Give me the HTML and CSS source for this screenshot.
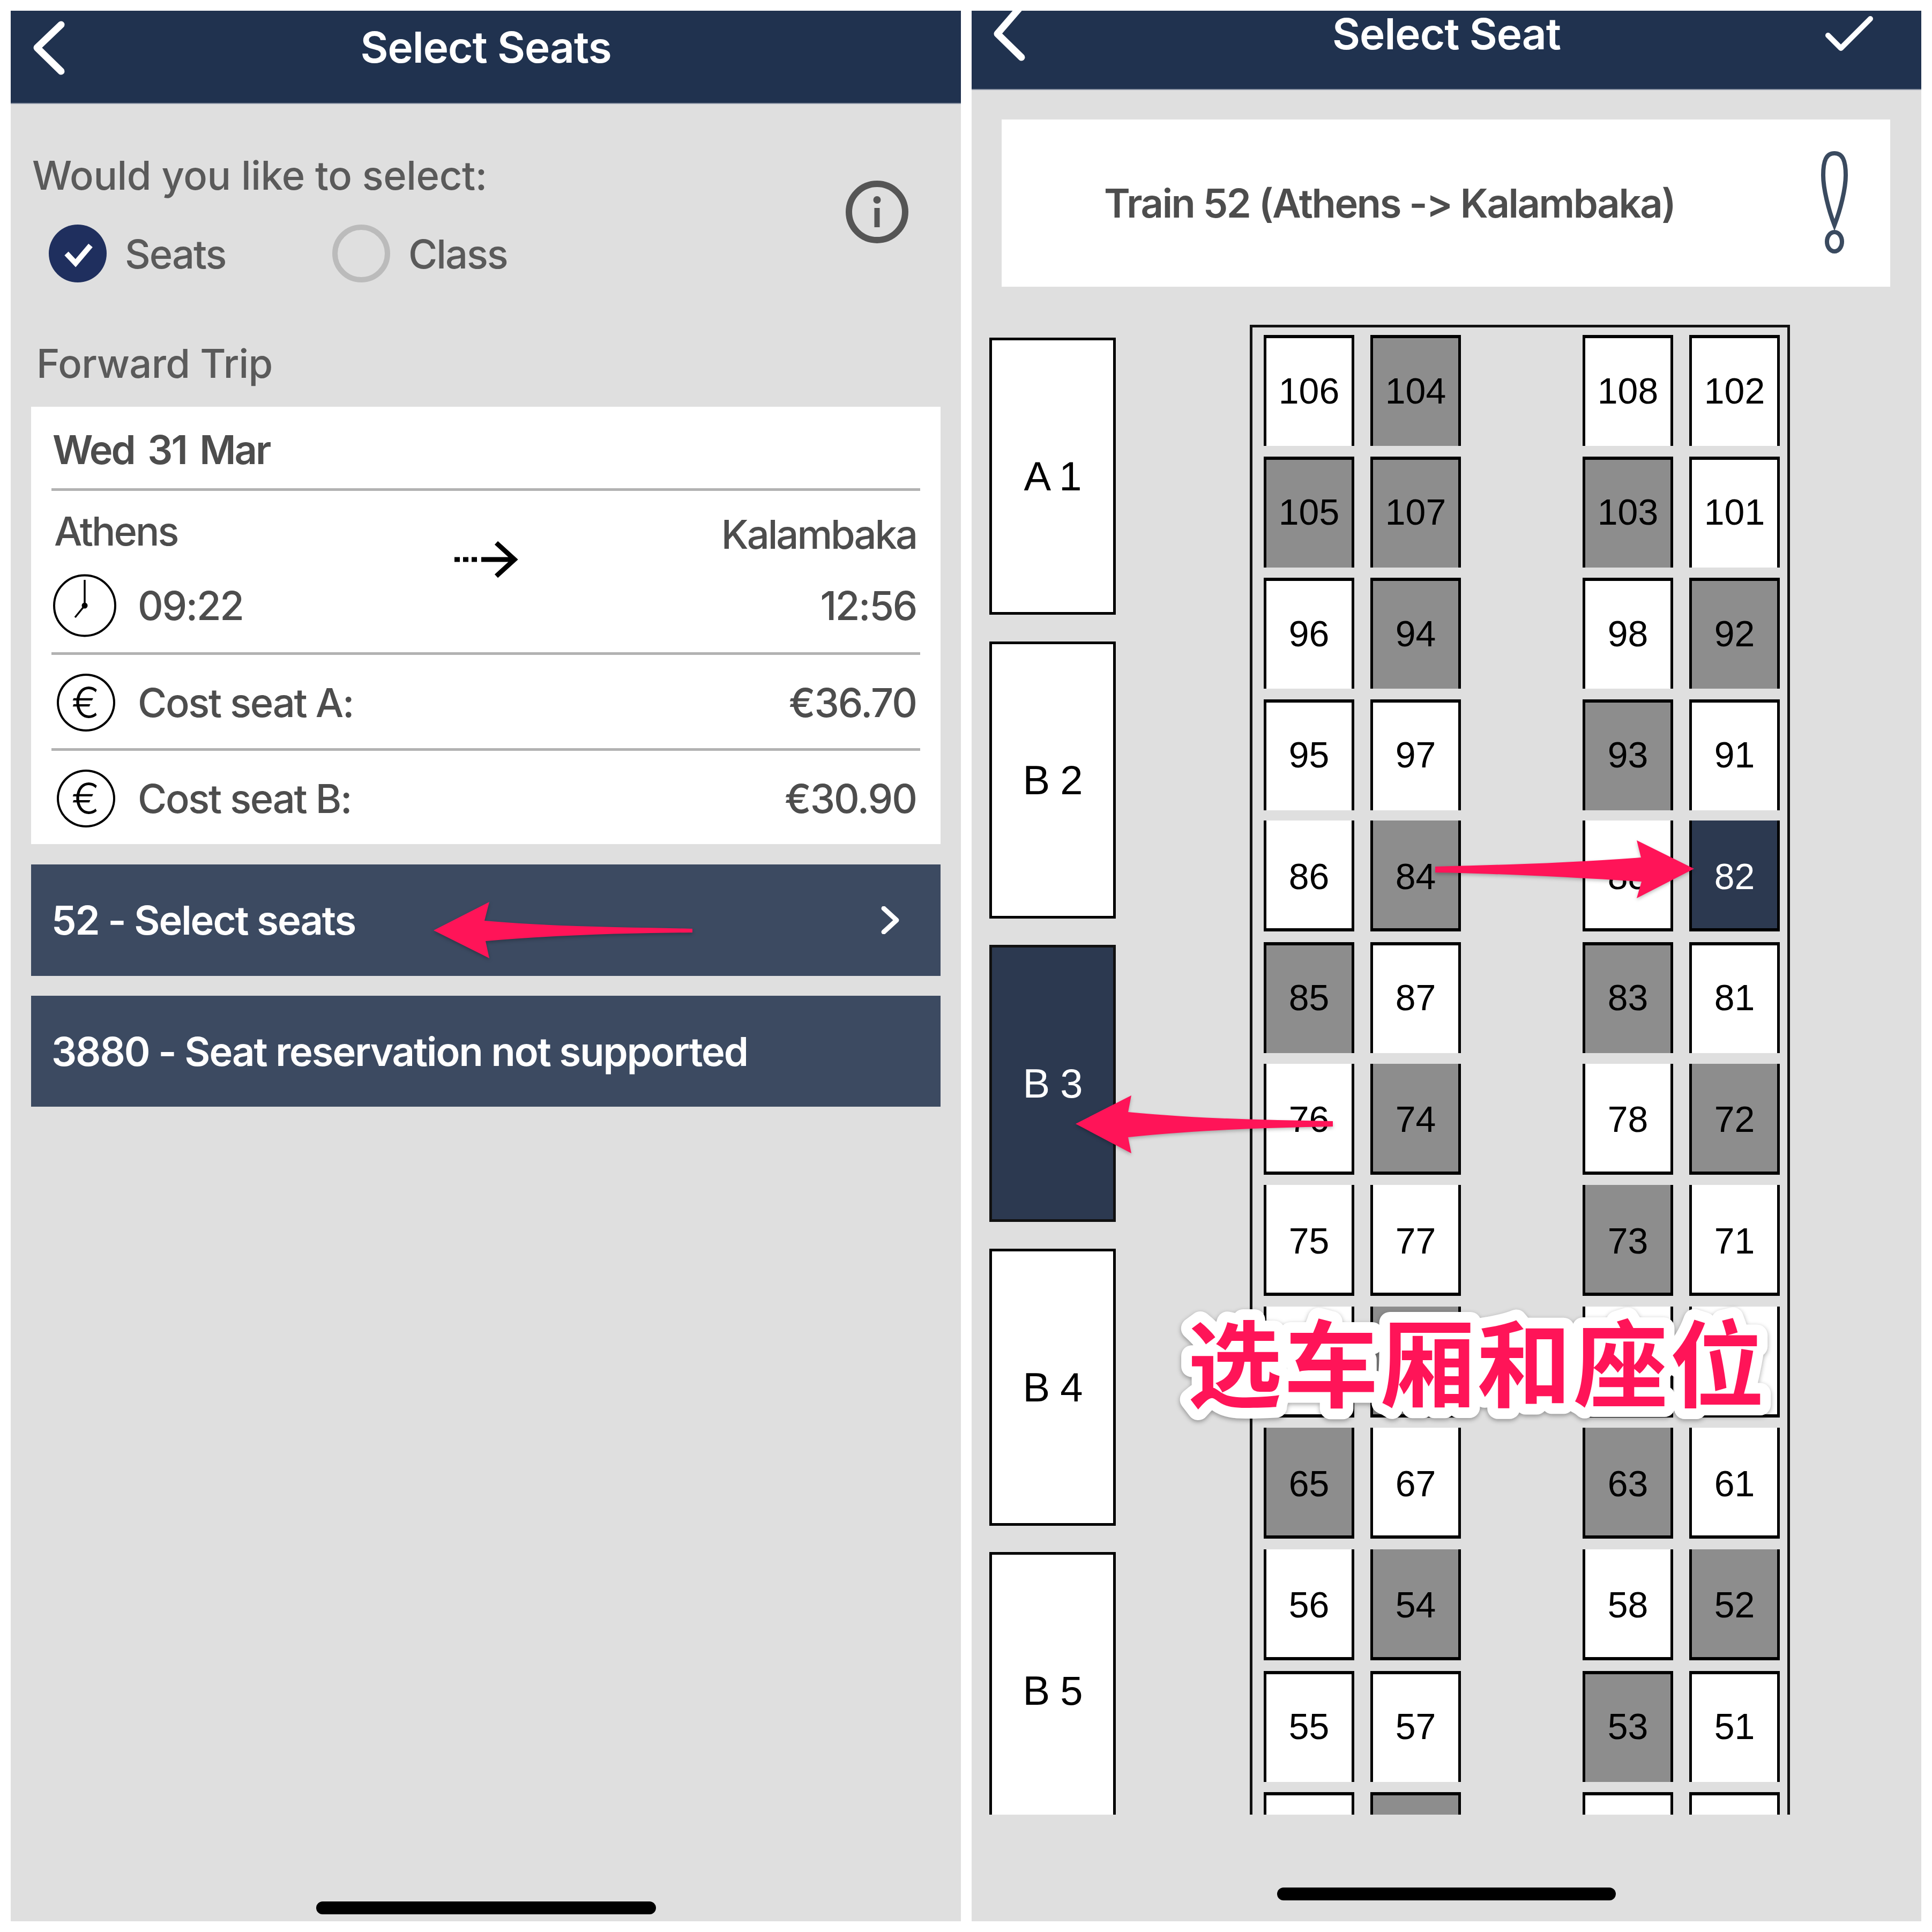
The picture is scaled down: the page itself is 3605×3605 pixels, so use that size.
FILE: index.html
```html
<!DOCTYPE html>
<html lang="en">
<head>
<meta charset="utf-8">
<title>Select Seats</title>
<link rel="stylesheet" href="styles.css">
</head>
<body>
<div class="page">
  <section class="panel">
    <header class="bar bar-left">
      <svg class="back back-left" viewBox="0 0 56 97"><path d="M51 5 L6 48 L51 92" /></svg>
      <h1 class="bar-title">Select Seats</h1>
    </header>
    <div class="choice">
      <div>
        <div class="label would">Would you like to select:</div>
        <div class="radios">
          <div class="radio-item first">
            <svg class="radio" viewBox="0 0 108 108"><circle cx="54" cy="54" r="54" fill="#1f2f5e"/><path d="M33 54 L50 72 L78 39" fill="none" stroke="#fff" stroke-width="10"/></svg>
            <span class="label opt">Seats</span>
          </div>
          <div class="radio-item">
            <svg class="radio" viewBox="0 0 108 108"><circle cx="54" cy="54" r="49" fill="none" stroke="#bbb" stroke-width="10"/></svg>
            <span class="label opt">Class</span>
          </div>
        </div>
      </div>
      <svg class="info" viewBox="0 0 117 117"><circle cx="58.500" cy="58.500" r="52.500" fill="none" stroke="#555" stroke-width="12"/><circle cx="58.500" cy="36" r="7" fill="#555"/><rect x="53.500" y="51" width="10" height="36" fill="#555"/></svg>
    </div>
    <div class="label trip">Forward Trip</div>
    <div class="card">
      <div class="date">Wed 31 Mar</div>
      <div class="rule"></div>
      <div class="route">
        <div class="route-side">
          <div class="city">Athens</div>
          <div class="time">
            <svg class="clock" viewBox="0 0 118 118"><ellipse cx="59" cy="59" rx="57" ry="56.500" fill="none" stroke="#000" stroke-width="4"/><path d="M59 11 V59 L41 81" fill="none" stroke="#000" stroke-width="3.500"/><circle cx="59" cy="59" r="5.500"/></svg>
            <span>09:22</span>
          </div>
        </div>
        <svg class="dots-arrow" viewBox="0 0 116 66"><path d="M0 33 H10 M16 33 H26 M32 33 H42" stroke="#000" stroke-width="9" fill="none"/><path d="M50 33 H111 M78 2 L112 33 L78 64" stroke="#000" stroke-width="9" fill="none"/></svg>
        <div class="route-side end">
          <div class="city city-end">Kalambaka</div>
          <div class="time">12:56</div>
        </div>
      </div>
      <div class="rule"></div>
      <div class="cost">
        <div class="cost-name"><span class="euro">€</span><span>Cost seat A:</span></div>
        <span>€36.70</span>
      </div>
      <div class="rule"></div>
      <div class="cost">
        <div class="cost-name"><span class="euro">€</span><span>Cost seat B:</span></div>
        <span>€30.90</span>
      </div>
    </div>
    <div class="action">
      <span>52 - Select seats</span>
      <svg class="chev" viewBox="0 0 36 52"><path d="M5 4 L29 26 L5 48"/></svg>
    </div>
    <div class="action">
      <span>3880 - Seat reservation not supported</span>
    </div>
    <div class="home home-left"></div>
  </section>

  <section class="panel">
    <header class="bar bar-right">
      <svg class="back back-right" viewBox="0 0 57 92"><path d="M50 -8 L6 43 L51 87" /></svg>
      <h1 class="bar-title">Select Seat</h1>
      <svg class="tick" viewBox="0 0 85 63"><path d="M3 34 L27 58 L82 3"/></svg>
    </header>
    <div class="train-card">
      <span>Train 52 (Athens -&gt; Kalambaka)</span>
      <svg class="bang" viewBox="0 0 52 191"><path d="M26 4 C11 4 5 17 5 45 C5 70 15 110 26 138 C37 110 47 70 47 45 C47 17 41 4 26 4 Z" fill="none" stroke="#3a4a5f" stroke-width="8"/><ellipse cx="26" cy="169" rx="14" ry="18" fill="none" stroke="#3a4a5f" stroke-width="8"/></svg>
    </div>
    <div class="plan">
      <div class="carriages">
        <div class="carriage">A 1</div>
        <div class="carriage">B 2</div>
        <div class="carriage on">B 3</div>
        <div class="carriage">B 4</div>
        <div class="carriage">B 5</div>
      </div>
      <div class="train">
        <div class="row t"><div class="pair"><div class="seat">106</div><div class="seat g">104</div></div><div class="pair"><div class="seat">108</div><div class="seat">102</div></div></div>
        <div class="row t"><div class="pair"><div class="seat g">105</div><div class="seat g">107</div></div><div class="pair"><div class="seat g">103</div><div class="seat">101</div></div></div>
        <div class="row t"><div class="pair"><div class="seat">96</div><div class="seat g">94</div></div><div class="pair"><div class="seat">98</div><div class="seat g">92</div></div></div>
        <div class="row t"><div class="pair"><div class="seat">95</div><div class="seat">97</div></div><div class="pair"><div class="seat g">93</div><div class="seat">91</div></div></div>
        <div class="row b"><div class="pair"><div class="seat">86</div><div class="seat g">84</div></div><div class="pair"><div class="seat">88</div><div class="seat on">82</div></div></div>
        <div class="row t"><div class="pair"><div class="seat g">85</div><div class="seat">87</div></div><div class="pair"><div class="seat g">83</div><div class="seat">81</div></div></div>
        <div class="row b"><div class="pair"><div class="seat">76</div><div class="seat g">74</div></div><div class="pair"><div class="seat">78</div><div class="seat g">72</div></div></div>
        <div class="row b"><div class="pair"><div class="seat">75</div><div class="seat">77</div></div><div class="pair"><div class="seat g">73</div><div class="seat">71</div></div></div>
        <div class="row b"><div class="pair"><div class="seat">66</div><div class="seat g">64</div></div><div class="pair"><div class="seat">68</div><div class="seat">62</div></div></div>
        <div class="row b"><div class="pair"><div class="seat g">65</div><div class="seat">67</div></div><div class="pair"><div class="seat g">63</div><div class="seat">61</div></div></div>
        <div class="row b"><div class="pair"><div class="seat">56</div><div class="seat g">54</div></div><div class="pair"><div class="seat">58</div><div class="seat g">52</div></div></div>
        <div class="row t"><div class="pair"><div class="seat">55</div><div class="seat">57</div></div><div class="pair"><div class="seat g">53</div><div class="seat">51</div></div></div>
        <div class="row t"><div class="pair"><div class="seat"></div><div class="seat g"></div></div><div class="pair"><div class="seat"></div><div class="seat"></div></div></div>
      </div>
    </div>
    <div class="home home-right"></div>
  </section>

  <svg class="arrows" viewBox="0 0 3605 3605">
    <path d="M809 1736 L913 1683 L904 1718 C1040 1730 1170 1730 1292 1733 L1292 1740 C1170 1741 1030 1745 906 1756 L913 1788 Z"/>
    <path d="M3161 1621 L3054 1568 L3062 1600 C2930 1610 2800 1614 2678 1617 L2678 1628 C2800 1630 2930 1637 3063 1645 L3054 1676 Z"/>
    <path d="M2007 2097 L2111 2044 L2105 2075 C2240 2088 2370 2090 2487 2092 L2487 2102 C2370 2104 2240 2108 2105 2122 L2111 2152 Z"/>
  </svg>
  <svg class="sticker" viewBox="0 0 1200 300"><text class="sticker-text" x="0" y="214">选车厢和座位</text></svg>
</div>
</body>
</html>
```

FILE: styles.css
```css
* { box-sizing: border-box; }
html, body { margin: 0; padding: 0; background: #fff; }
.page {
  position: relative;
  width: 3605px;
  height: 3605px;
  padding: 20px;
  display: flex;
  gap: 20px;
  font-family: Inter, "Noto Sans", sans-serif;
  font-size: 74px;
  font-weight: 500;
  color: #555;
  letter-spacing: -2px;
}
.panel {
  width: 1773px;
  height: 3565px;
  background: #dfdfdf;
  display: flex;
  flex-direction: column;
  overflow: hidden;
}
.panel + .panel { width: 1772px; }

.bar {
  position: relative;
  background: #20324f;
  display: flex;
  justify-content: center;
  color: #fff;
  flex: none;
  box-shadow: 0 2px 0 #8a93a3;
}
.bar-left { height: 172px; padding-top: 23px; }
.bar-right { height: 146px; padding-top: 0; }
.bar-title {
  margin: 0;
  font-size: 80px;
  line-height: 86px;
  font-weight: 600;
  letter-spacing: -1px;
}
.bar-left .bar-title { line-height: 90px; }
.back, .tick { position: absolute; fill: none; stroke: #fff; stroke-linecap: round; stroke-linejoin: round; overflow: visible; }
.back { stroke-width: 13; }
.back-left { left: 43px; top: 21px; width: 56px; height: 97px; }
.back-right { left: 42px; top: 0; width: 57px; height: 92px; }
.tick { left: 1595px; top: 12px; width: 85px; height: 63px; stroke-width: 10; }

.choice {
  display: flex;
  justify-content: space-between;
  align-items: flex-start;
  padding: 90px 98px 0 40px;
}
.label { line-height: 90px; color: #5a5a5a; }
.would { letter-spacing: -.4px; }
.opt { letter-spacing: -2px; padding-top: 2px; margin-left: -2px; }
.radios { display: flex; margin-top: 46px; padding-left: 31px; }
.radio-item { display: flex; align-items: center; gap: 36px; height: 110px; }
.radio-item.first { width: 529px; }
.radio { width: 108px; height: 108px; flex: none; }
.info { width: 117px; height: 117px; margin-top: 55px; }
.trip { margin-top: 105px; padding-left: 48px; letter-spacing: -.7px; }

.card {
  margin: 36px 38px 0;
  background: #fff;
  display: flex;
  flex-direction: column;
  color: #4d4d4d;
  flex: none;
}
.date { height: 152px; padding: 35px 0 0 40px; line-height: 90px; font-weight: 600; letter-spacing: -3px; word-spacing: 9px; }
.rule { height: 5px; margin: 0 38px; background: #b2b2b2; flex: none; }
.route {
  height: 301px;
  padding: 30px 45px 0 43px;
  display: grid;
  grid-template-columns: 1fr auto 1fr;
}
.route-side { display: flex; flex-direction: column; }
.route-side.end { align-items: flex-end; }
.city { line-height: 90px; height: 90px; letter-spacing: -3px; }
.city-end { margin-top: 6px; height: 84px; }
.time { display: flex; align-items: center; gap: 40px; margin-top: 35px; height: 118px; letter-spacing: -2.300px; }
.clock { width: 118px; height: 118px; flex: none; margin-left: -2px; }
.dots-arrow { width: 116px; height: 66px; margin-top: 65px; overflow: visible; }
.cost {
  height: 174px;
  padding: 3px 45px 0 48px;
  display: flex;
  align-items: center;
  justify-content: space-between;
}
.cost-name { display: flex; align-items: center; gap: 42px; letter-spacing: -2.300px; }
.euro {
  width: 109px;
  height: 108px;
  border: 4px solid #000;
  border-radius: 50%;
  display: flex;
  align-items: center;
  justify-content: center;
  font-weight: 300;
  font-size: 78px;
  color: #000;
  flex: none;
  padding-right: 4px;
}
.action {
  margin: 38px 38px 0;
  height: 208px;
  padding: 0 75px 0 38px;
  background: #3c4a61;
  color: #fff;
  font-weight: 600;
  display: flex;
  align-items: center;
  justify-content: space-between;
  flex: none;
}
.action + .action { margin-top: 37px; height: 207px; }
.chev { width: 36px; height: 52px; fill: none; stroke: #fff; stroke-width: 9; stroke-linecap: round; stroke-linejoin: round; }
.home { background: #000; height: 24px; border-radius: 12px; margin-top: auto; flex: none; align-self: center; }
.home-left { width: 634px; margin-bottom: 13px; }
.home-right { width: 632px; margin-bottom: 39px; }

.train-card {
  margin: 57px 58px 71px 56px;
  height: 312px;
  padding: 0 78px 0 191px;
  background: #fff;
  color: #4d4d4d;
  font-weight: 600;
  display: flex;
  align-items: center;
  justify-content: space-between;
  flex: none;
  letter-spacing: -2.400px;
}
.bang { width: 52px; height: 191px; margin-top: -4px; }

.plan {
  height: 2780px;
  padding-left: 33px;
  display: flex;
  align-items: flex-start;
  overflow: hidden;
  flex: none;
  font-family: "Liberation Sans", Arial, sans-serif;
  font-weight: 400;
  color: #000;
  letter-spacing: 0;
}
.carriages { width: 236px; margin-top: 24px; display: flex; flex-direction: column; gap: 49.500px; flex: none; }
.carriage {
  height: 517px;
  background: #fff;
  border: 5px solid #000;
  display: flex;
  align-items: center;
  justify-content: center;
  font-size: 76px;
  flex: none;
  letter-spacing: -1px;
}
.carriage.on { background: #2c3950; color: #fff; border-color: #111; }
.train {
  width: 1008px;
  margin-left: 250px;
  padding: 14px 14px 0 21px;
  border: solid #111;
  border-width: 5px 5px 0;
  display: flex;
  flex-direction: column;
  gap: 19.600px;
  flex: none;
}
.row { display: flex; justify-content: space-between; height: 207px; flex: none; }
.pair { display: flex; gap: 30px; }
.seat {
  width: 169px;
  height: 207px;
  background: #fff;
  border: solid #000;
  border-width: 0 5px;
  display: flex;
  align-items: center;
  justify-content: center;
  font-size: 68px;
}
.row.t .seat { border-top-width: 6px; padding-bottom: 6px; }
.row.b .seat { border-bottom-width: 6px; padding-top: 6px; }
.seat.g { background: #8d8d8d; }
.seat.on { background: #2c3950; color: #fff; }

.arrows {
  position: absolute;
  left: 0;
  top: 0;
  width: 3605px;
  height: 3605px;
  fill: #ff1458;
  filter: drop-shadow(0 3px 3px rgba(0, 0, 0, .25));
  pointer-events: none;
}
.sticker {
  position: absolute;
  left: 2216px;
  top: 2398px;
  width: 1200px;
  height: 300px;
  overflow: visible;
  filter: drop-shadow(0 3px 4px rgba(0, 0, 0, .35));
}
.sticker-text {
  font-family: "Noto Sans CJK SC", sans-serif;
  font-weight: 700;
  font-size: 176px;
  letter-spacing: 4px;
  fill: #ff1458;
  stroke: #fff;
  stroke-width: 40px;
  stroke-linejoin: round;
  paint-order: stroke fill;
}
```
